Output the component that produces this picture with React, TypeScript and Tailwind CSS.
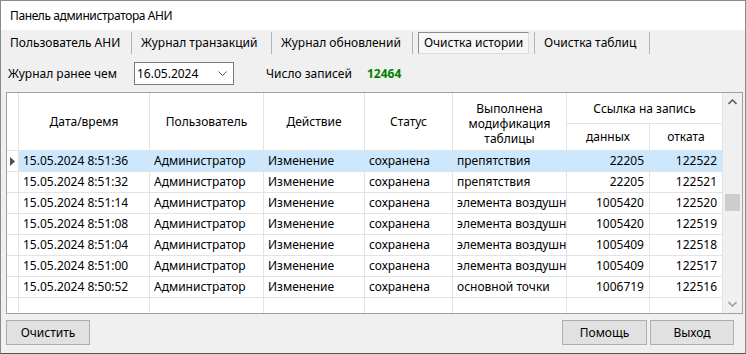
import React from "react";

const tabs = [
  { label: "Пользователь АНИ", w: "w-[131px]" },
  { label: "Журнал транзакций", w: "w-[140px]" },
  { label: "Журнал обновлений", w: "w-[141px]" },
];

const rows = [
  ["15.05.2024 8:51:36", "Администратор", "Изменение", "сохранена", "препятствия", "22205", "122522"],
  ["15.05.2024 8:51:32", "Администратор", "Изменение", "сохранена", "препятствия", "22205", "122521"],
  ["15.05.2024 8:51:14", "Администратор", "Изменение", "сохранена", "элемента воздушной линии", "1005420", "122520"],
  ["15.05.2024 8:51:08", "Администратор", "Изменение", "сохранена", "элемента воздушной линии", "1005420", "122519"],
  ["15.05.2024 8:51:04", "Администратор", "Изменение", "сохранена", "элемента воздушной линии", "1005409", "122518"],
  ["15.05.2024 8:51:00", "Администратор", "Изменение", "сохранена", "элемента воздушной линии", "1005409", "122517"],
  ["15.05.2024 8:50:52", "Администратор", "Изменение", "сохранена", "основной точки", "1006719", "122516"],
];

const cols = "grid grid-cols-[12px_131px_114px_101px_88px_114px_83px_72px]";

const Btn = ({ children, className }: { children: React.ReactNode; className?: string }) => (
  <button className={"h-[25px] border border-[#adadad] bg-[#e1e1e1] text-[12px] text-black " + (className ?? "")}>
    {children}
  </button>
);

export default function App() {
  return (
    <div
      className="w-[746px] h-[354px] border border-[#8a8a8a] border-b-[#555] bg-[#f0f0f0] flex flex-col text-[12px] text-black overflow-hidden"
      style={{ fontFamily: '"Noto Sans", "DejaVu Sans", sans-serif' }}
    >
      <div className="h-[29px] bg-white flex items-center pl-[9px] shrink-0 tracking-[-0.4px]">Панель администратора АНИ</div>

      {/* tabs */}
      <div className="h-[25px] flex items-stretch shrink-0">
        {tabs.map((t) => (
          <div key={t.label} className={`${t.w} flex items-center pl-[9px] py-[2px]`}>
            <span className="flex-1">{t.label}</span>
            <span className="w-px h-[22px] bg-[#b4b4b4]" />
          </div>
        ))}
        <div className="w-[122px] flex items-center py-[2px]">
          <div className="ml-[5px] w-[111px] h-[22px] border border-[#8c8c8c] border-r-[#ddd] border-b-[#ddd] bg-[#f7f7f7] flex items-center justify-center">
            Очистка истории
          </div>
          <span className="ml-auto w-px h-[22px] bg-[#b4b4b4]" />
        </div>
        <div className="w-[115px] flex items-center pl-[9px] py-[2px]">
          <span className="flex-1">Очистка таблиц</span>
          <span className="w-px h-[22px] bg-[#b4b4b4]" />
        </div>
      </div>

      {/* filter */}
      <div className="h-[37px] flex items-center pl-[7px] shrink-0">
        <span className="w-[126px]">Журнал ранее чем</span>
        <div className="w-[100px] h-[23px] border border-[#7a7a7a] bg-white flex items-center pl-[2px] pr-[6px]">
          <span className="flex-1">16.05.2024</span>
          <svg width="9" height="6" viewBox="0 0 9 6" className="text-[#555]">
            <path d="M0.5 0.5 L4.5 4.5 L8.5 0.5" fill="none" stroke="currentColor" strokeWidth="1" />
          </svg>
        </div>
        <span className="ml-[32px] w-[101px]">Число записей</span>
        <span className="font-bold text-[#008000]">12464</span>
      </div>

      {/* grid */}
      <div className="ml-[5px] w-[737px] h-[222px] border border-[#a0a0a0] bg-white flex shrink-0">
        <div className="w-[715px] flex flex-col overflow-hidden">
          <div className={`${cols} grid-rows-[31px_26px] border-b border-[#e3e3e3] text-center`}>
            <div className="row-span-2 border-r border-[#e3e3e3]" />
            <div className="row-span-2 border-r border-[#e3e3e3] flex items-center justify-center">Дата/время</div>
            <div className="row-span-2 border-r border-[#e3e3e3] flex items-center justify-center">Пользователь</div>
            <div className="row-span-2 border-r border-[#e3e3e3] flex items-center justify-center">Действие</div>
            <div className="row-span-2 border-r border-[#e3e3e3] flex items-center justify-center">Статус</div>
            <div className="row-span-2 border-r border-[#e3e3e3] flex items-center justify-center leading-[15px] pt-[3px]">
              Выполнена<br />модификация<br />таблицы
            </div>
            <div className="col-span-2 border-b border-[#e3e3e3] flex items-center justify-center pt-[2px]">Ссылка на запись</div>
            <div className="border-r border-[#e3e3e3] flex items-center justify-center">данных</div>
            <div className="flex items-center justify-center">отката</div>
          </div>
          {rows.map((r, i) => (
            <div key={i} className={`${cols} h-[21px] border-b border-[#e3e3e3]`}>
              <div className="border-r border-[#e3e3e3] flex items-center pl-[3px]">
                {i === 0 && (
                  <svg width="5" height="9" viewBox="0 0 5 9">
                    <path d="M0 0 L5 4.5 L0 9 Z" fill="#505050" />
                  </svg>
                )}
              </div>
              {r.map((c, j) => (
                <div
                  key={j}
                  className={`${j < 6 ? "border-r border-[#e3e3e3]" : ""} ${i === 0 ? "bg-[#cce8ff]" : ""} flex items-center overflow-hidden whitespace-nowrap ${j >= 5 ? "justify-end pr-[5px]" : "pl-[4px]"}`}
                >
                  <span className="overflow-hidden">{c}</span>
                </div>
              ))}
            </div>
          ))}
          <div className={`${cols} flex-1`}>
            {Array.from({ length: 8 }).map((_, j) => (
              <div key={j} className={j < 7 ? "border-r border-[#e3e3e3]" : ""} />
            ))}
          </div>
        </div>
        {/* scrollbar */}
        <div className="flex-1 bg-[#f0f0f0] border-l border-[#e3e3e3] flex flex-col items-center">
          <div className="h-[18px] flex items-center justify-center">
            <svg width="9" height="6" viewBox="0 0 9 6">
              <path d="M0.5 5 L4.5 1 L8.5 5" fill="none" stroke="#606060" strokeWidth="1.6" />
            </svg>
          </div>
          <div className="mt-[83px] w-[15px] h-[17px] bg-[#cdcdcd]" />
          <div className="mt-auto h-[18px] flex items-center justify-center">
            <svg width="9" height="6" viewBox="0 0 9 6">
              <path d="M0.5 1 L4.5 5 L8.5 1" fill="none" stroke="#a0a0a0" strokeWidth="1.6" />
            </svg>
          </div>
        </div>
      </div>

      {/* buttons */}
      <div className="flex-1 flex items-center px-[5px] pb-[2px]">
        <Btn className="w-[84px]">Очистить</Btn>
        <Btn className="ml-auto w-[85px]">Помощь</Btn>
        <Btn className="ml-[3px] mr-[6px] w-[84px]">Выход</Btn>
      </div>
    </div>
  );
}
